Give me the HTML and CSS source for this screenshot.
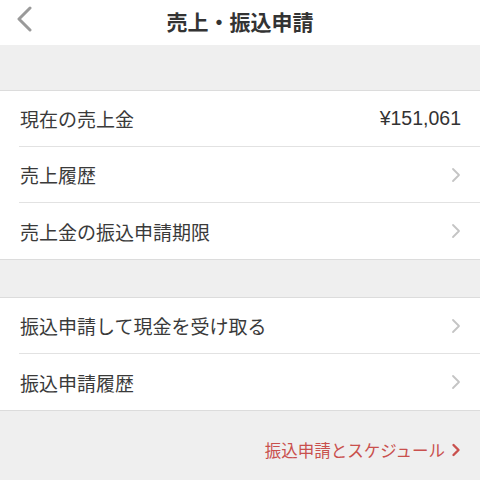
FILE: index.html
```html
<!DOCTYPE html>
<html lang="ja">
<head>
<meta charset="utf-8">
<link rel="stylesheet" href="styles.css">
</head>
<body>
<header class="nav">
  <span class="back"><svg width="18" height="26" viewBox="0 0 18 26"><path d="M15 2 L4 13 L15 24" fill="none" stroke="#9a9a9a" stroke-width="3" stroke-linecap="round" stroke-linejoin="round"/></svg></span>
  <h1 class="title">売上・振込申請</h1>
</header>
<div class="gap gap-top"></div>
<ul class="group">
  <li class="row"><span class="label">現在の売上金</span><span class="value">¥151,061</span></li>
  <li class="row"><span class="label">売上履歴</span><span class="chev"><svg width="10" height="16" viewBox="0 0 10 16"><path d="M2 2 L8 8 L2 14" fill="none" stroke="#c4c4c4" stroke-width="1.8" stroke-linecap="round" stroke-linejoin="round"/></svg></span></li>
  <li class="row"><span class="label">売上金の振込申請期限</span><span class="chev"><svg width="10" height="16" viewBox="0 0 10 16"><path d="M2 2 L8 8 L2 14" fill="none" stroke="#c4c4c4" stroke-width="1.8" stroke-linecap="round" stroke-linejoin="round"/></svg></span></li>
</ul>
<div class="gap gap-mid"></div>
<ul class="group">
  <li class="row"><span class="label">振込申請して現金を受け取る</span><span class="chev"><svg width="10" height="16" viewBox="0 0 10 16"><path d="M2 2 L8 8 L2 14" fill="none" stroke="#c4c4c4" stroke-width="1.8" stroke-linecap="round" stroke-linejoin="round"/></svg></span></li>
  <li class="row"><span class="label">振込申請履歴</span><span class="chev"><svg width="10" height="16" viewBox="0 0 10 16"><path d="M2 2 L8 8 L2 14" fill="none" stroke="#c4c4c4" stroke-width="1.8" stroke-linecap="round" stroke-linejoin="round"/></svg></span></li>
</ul>
<div class="footer">
  <a class="link">振込申請とスケジュール<svg width="10" height="14" viewBox="0 0 10 14"><path d="M2.5 2 L7.5 7 L2.5 12" fill="none" stroke="#c9504d" stroke-width="2.4" stroke-linecap="round" stroke-linejoin="round"/></svg></a>
</div>
</body>
</html>
```
FILE: styles.css
```css
* { box-sizing: border-box; }
html, body { margin: 0; padding: 0; }
body {
  width: 480px;
  height: 480px;
  overflow: hidden;
  background: #efefef;
  font-family: "Noto Sans CJK JP", "Noto Sans", sans-serif;
  color: #3a3a3a;
}
.nav {
  height: 45px;
  background: #fff;
  display: flex;
  align-items: center;
  justify-content: center;
  position: relative;
}
.back {
  position: absolute;
  left: 15px;
  top: 6px;
  display: flex;
}
.title {
  margin: 0;
  font-size: 21px;
  font-weight: 700;
  color: #333;
  line-height: 1;
  margin-top: -2px;
}
.gap { background: #efefef; }
.gap-top { height: 46px; border-bottom: 1px solid #dcdcdc; }
.gap-mid { height: 38px; border-bottom: 1px solid #dcdcdc; }
.group {
  list-style: none;
  margin: 0;
  padding: 0 0 0 19px;
  background: #fff;
  border-bottom: 1px solid #dcdcdc;
}
.row {
  height: 56px;
  display: flex;
  align-items: center;
  justify-content: space-between;
  padding-right: 19px;
  border-bottom: 1px solid #e2e2e2;
  font-size: 19px;
}
.row:last-child { border-bottom: none; }
.label { padding-left: 1px; }
.value { font-family: "Liberation Sans", sans-serif; font-size: 19.5px; color: #333; }
.chev { display: flex; }
.footer {
  display: flex;
  justify-content: flex-end;
  padding: 27px 19px 0 0;
}
.link {
  color: #c9504d;
  font-size: 16.5px;
  display: flex;
  align-items: center;
  gap: 6px;
}
```
